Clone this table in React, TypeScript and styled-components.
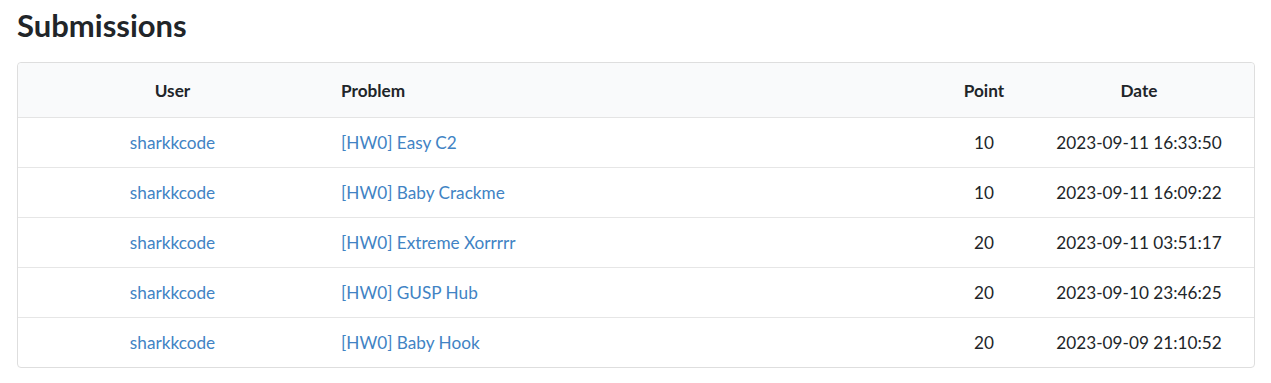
import React from "react"
import styled, { createGlobalStyle } from "styled-components"

const GlobalStyle = createGlobalStyle`
  body {
    margin: 0;
    background: #fff;
    font-family: Lato, "Helvetica Neue", Arial, sans-serif;
    color: #212529;
  }
`

const submissions = [
  { user: "sharkkcode", problem: "[HW0] Easy C2", point: 10, date: "2023-09-11 16:33:50" },
  { user: "sharkkcode", problem: "[HW0] Baby Crackme", point: 10, date: "2023-09-11 16:09:22" },
  { user: "sharkkcode", problem: "[HW0] Extreme Xorrrrr", point: 20, date: "2023-09-11 03:51:17" },
  { user: "sharkkcode", problem: "[HW0] GUSP Hub", point: 20, date: "2023-09-10 23:46:25" },
  { user: "sharkkcode", problem: "[HW0] Baby Hook", point: 20, date: "2023-09-09 21:10:52" },
]

const App = () => {
  return (
    <>
      <GlobalStyle />
      <Page>
        <Title>Submissions</Title>
        <Table>
          <colgroup>
            <col style={{ width: 309 }} />
            <col />
            <col style={{ width: 80 }} />
            <col style={{ width: 230 }} />
          </colgroup>
          <thead>
            <tr>
              <Th>User</Th>
              <Th align="left">Problem</Th>
              <Th>Point</Th>
              <Th>Date</Th>
            </tr>
          </thead>
          <tbody>
            {submissions.map((s, i) => (
              <tr key={i}>
                <Td>
                  <Link href="#">{s.user}</Link>
                </Td>
                <Td align="left">
                  <Link href="#">{s.problem}</Link>
                </Td>
                <Td>{s.point}</Td>
                <Td>{s.date}</Td>
              </tr>
            ))}
          </tbody>
        </Table>
      </Page>
    </>
  )
}

const Page = styled.main`
  padding: 5px 16px 14px 17px;
`

const Title = styled.h1`
  margin: 0 0 17px;
  font-size: 31px;
  font-weight: 700;
  line-height: 40px;
  color: #212529;
`

const Table = styled.table`
  width: 100%;
  border-collapse: separate;
  border-spacing: 0;
  table-layout: fixed;
  border: 1px solid #dedede;
  border-radius: 4px;
  font-size: 17.2px;
  tbody tr:last-child td {
    border-bottom: none;
  }
`

const Th = styled.th<{ align?: string }>`
  height: 54px;
  padding: 0 14px;
  text-align: ${(p) => p.align || "center"};
  font-weight: 700;
  color: #212529;
  background: #f9fafb;
  border-bottom: 1px solid #e4e4e4;
  &:first-child {
    border-top-left-radius: 4px;
  }
  &:last-child {
    border-top-right-radius: 4px;
  }
`

const Td = styled.td<{ align?: string }>`
  height: 49px;
  padding: 0 14px;
  text-align: ${(p) => p.align || "center"};
  border-bottom: 1px solid #e6e6e6;
  color: #212529;
`

const Link = styled.a`
  color: #4183c4;
  text-decoration: none;
`

export default App
